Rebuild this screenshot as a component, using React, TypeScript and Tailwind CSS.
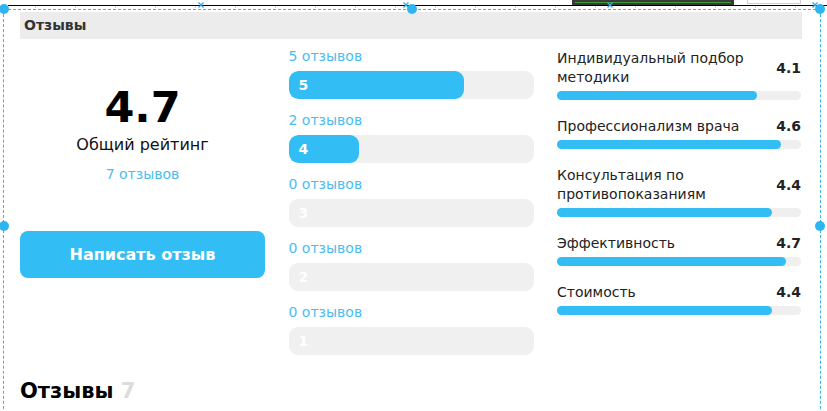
import type { ReactNode } from "react";

const BLUE = "bg-[#33bdf5]";

interface StarRow {
  stars: number;
  count: number;
}

interface Criterion {
  title: string;
  score: number;
}

const starRows: StarRow[] = [
  { stars: 5, count: 5 },
  { stars: 4, count: 2 },
  { stars: 3, count: 0 },
  { stars: 2, count: 0 },
  { stars: 1, count: 0 },
];

const criteria: Criterion[] = [
  { title: "Индивидуальный подбор методики", score: 4.1 },
  { title: "Профессионализм врача", score: 4.6 },
  { title: "Консультация по противопоказаниям", score: 4.4 },
  { title: "Эффективность", score: 4.7 },
  { title: "Стоимость", score: 4.4 },
];

const total = starRows.reduce((sum, r) => sum + r.count, 0);

function Handle({ className }: { className: string }) {
  return (
    <span
      className={`absolute h-[10px] w-[10px] -translate-x-1/2 -translate-y-1/2 rounded-full bg-[#2fb4f2] ${className}`}
    />
  );
}

function Cross({ className }: { className: string }) {
  return (
    <svg
      className={`absolute -translate-x-1/2 -translate-y-1/2 ${className}`}
      width="7"
      height="7"
      viewBox="0 0 7 7"
    >
      <path d="M1 1 L6 6 M6 1 L1 6" stroke="#2fa8e6" strokeWidth="1.2" />
    </svg>
  );
}

// editor chrome drawn over the page (selection frame, ruler)
function EditorOverlay() {
  return (
    <div className="pointer-events-none absolute inset-0">
      <div className="absolute left-[572px] top-0 h-[5px] w-[162px] bg-[#3a3a3a]">
        <div className="mx-[3px] mt-[2px] h-[1px] bg-[#3f9a3a]" />
      </div>
      <div className="absolute left-[747px] top-[-1px] h-[5px] w-[54px] border border-[#cfcfcf] bg-white" />
      <div className="absolute left-[8px] right-0 top-[5px] h-[3px] border-t border-black bg-[repeating-linear-gradient(to_right,transparent_0_27px,#d8d8d8_27px_28px,transparent_28px_40px)]" />
      <div className="absolute left-[3px] top-[9px] h-[420px] w-[818px] border border-b-0 border-dashed border-[#3ab2ee]" />
      <Cross className="left-[201px] top-[5px]" />
      <Cross className="left-[406px] top-[5px]" />
      <Cross className="left-[610px] top-[5px]" />
      <Cross className="left-[815px] top-[5px]" />
      <Handle className="left-[4px] top-[9px]" />
      <Handle className="left-[412px] top-[9px]" />
      <Handle className="left-[820px] top-[9px]" />
      <Handle className="left-[4px] top-[226px]" />
      <Handle className="left-[820px] top-[226px]" />
    </div>
  );
}

function Column({ children, className = "" }: { children: ReactNode; className?: string }) {
  return <div className={`flex flex-col ${className}`}>{children}</div>;
}

export default function App() {
  return (
    <div className="relative h-[411px] w-[827px] overflow-hidden bg-white font-['DejaVu_Sans',Verdana,sans-serif] text-[#222]">
      <div className="w-[802px] pl-[20px] pt-[12px]">
        <div className="flex h-[27px] items-center bg-[#ececec] pl-[4px] text-[14px] font-bold text-[#333]">
          Отзывы
        </div>

        <div className="mt-[7px] flex w-[781px] justify-between">
          {/* summary */}
          <Column className="w-[245px] items-center pt-[37px]">
            <div className="text-[43px] font-bold leading-[48px] text-black">4.7</div>
            <div className="mt-[4px] text-[16px] leading-[20px] text-[#111]">Общий рейтинг</div>
            <div className="mt-[9px] text-[14px] leading-[20px] text-[#4cbdf0]">{total} отзывов</div>
            <button
              type="button"
              className={`mt-[47px] h-[47px] w-full rounded-[8px] ${BLUE} text-[16px] font-bold text-white`}
            >
              Написать отзыв
            </button>
          </Column>

          {/* distribution by stars */}
          <Column className="w-[245px] gap-[11px]">
            {starRows.map((row) => (
              <div key={row.stars}>
                <div className="text-[14px] leading-[20px] text-[#4cbdf0]">{row.count} отзывов</div>
                <div className="relative mt-[5px] h-[28px] overflow-hidden rounded-[9px] bg-[#f0f0f0]">
                  {row.count > 0 && (
                    <div
                      className={`h-full rounded-[9px] ${BLUE}`}
                      style={{ width: `${(row.count / total) * 100}%` }}
                    />
                  )}
                  <span className="absolute left-[10px] top-0 text-[14px] font-bold leading-[28px] text-white">
                    {row.stars}
                  </span>
                </div>
              </div>
            ))}
          </Column>

          {/* criteria */}
          <Column className="w-[244px] gap-[17px] pt-[3px]">
            {criteria.map((c) => (
              <div key={c.title}>
                <div className="flex items-center justify-between">
                  <span className="mr-[20px] text-[14px] leading-[19px] text-[#222]">{c.title}</span>
                  <span className="text-[14px] font-bold leading-[19px] text-[#222]">{c.score.toFixed(1)}</span>
                </div>
                <div className="mt-[4px] h-[9px] rounded-full bg-[#efefef]">
                  <div className={`h-full rounded-full ${BLUE}`} style={{ width: `${(c.score / 5) * 100}%` }} />
                </div>
              </div>
            ))}
          </Column>
        </div>

        <div className="mt-[22px] text-[21px] font-bold leading-[28px] text-black">
          Отзывы <span className="text-[#dcdcdc]">7</span>
        </div>
      </div>
      <EditorOverlay />
    </div>
  );
}
